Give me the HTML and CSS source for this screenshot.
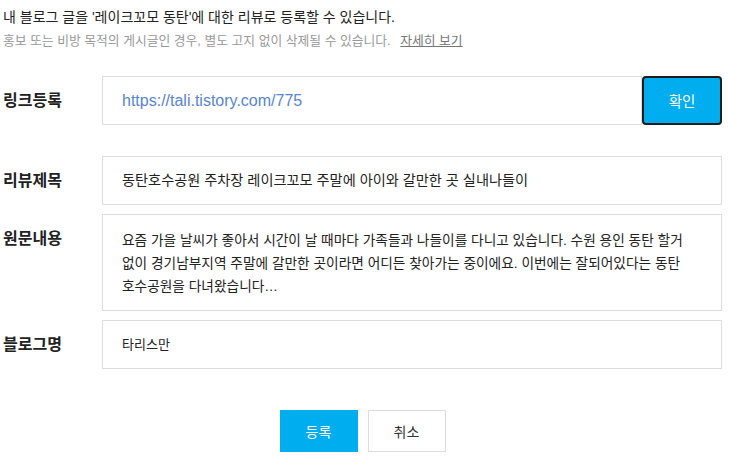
FILE: index.html
```html
<!DOCTYPE html>
<html lang="ko">
<head>
<meta charset="utf-8">
<link rel="stylesheet" href="styles.css">
</head>
<body>
<div class="page">
  <div class="intro">
    <p class="intro-main">내 블로그 글을 '레이크꼬모 동탄'에 대한 리뷰로 등록할 수 있습니다.</p>
    <p class="intro-sub">홍보 또는 비방 목적의 게시글인 경우, 별도 고지 없이 삭제될 수 있습니다. <a class="more" href="#">자세히 보기</a></p>
  </div>

  <div class="row row-link">
    <div class="label">링크등록</div>
    <div class="field field-url">https://tali.tistory.com/775</div>
    <button class="btn-confirm">확인</button>
  </div>

  <div class="row row-gap">
    <div class="label">리뷰제목</div>
    <div class="field field-title">동탄호수공원 주차장 레이크꼬모 주말에 아이와 갈만한 곳 실내나들이</div>
  </div>

  <div class="row">
    <div class="label">원문내용</div>
    <div class="field field-body">요즘 가을 날씨가 좋아서 시간이 날 때마다 가족들과 나들이를 다니고 있습니다. 수원 용인 동탄 할거<br>없이 경기남부지역 주말에 갈만한 곳이라면 어디든 찾아가는 중이에요. 이번에는 잘되어있다는 동탄<br>호수공원을 다녀왔습니다…</div>
  </div>

  <div class="row">
    <div class="label">블로그명</div>
    <div class="field">타리스만</div>
  </div>

  <div class="actions">
    <button class="btn btn-primary">등록</button>
    <button class="btn btn-cancel">취소</button>
  </div>
</div>
</body>
</html>
```

FILE: styles.css
```css
* { box-sizing: border-box; }
html, body { margin: 0; padding: 0; background: #fff; }
body {
  font-family: "Liberation Sans", "Noto Sans CJK KR", sans-serif;
  color: #222;
}
.page {
  width: 722px;
  padding: 0 0 0 3px;
}
.intro p { margin: 0; white-space: nowrap; }
.intro-main {
  padding-top: 7px;
  font-size: 14px;
  line-height: 20px;
  color: #222;
}
.intro-sub {
  margin-top: 4px !important;
  font-size: 12.8px;
  line-height: 20px;
  color: #999;
}
.more {
  margin-left: 6px;
  color: #777;
  text-decoration: underline;
}
.row {
  display: flex;
  align-items: flex-start;
  margin-top: 9px;
}
.row-link { margin-top: 25px; }
.row-gap { margin-top: 31px; }
.label {
  width: 99px;
  flex: none;
  font-size: 16px;
  font-weight: bold;
  line-height: 49px;
  color: #222;
}
.field {
  flex: 1;
  height: 49px;
  border: 1px solid #ddd;
  padding: 0 19px;
  font-size: 13px;
  line-height: 47px;
  color: #222;
  white-space: nowrap;
  overflow: hidden;
}
.field-url {
  font-size: 16px;
  color: #5785cf;
}
.field-title {
  font-size: 14.2px;
}
.field-body {
  height: 97px;
  padding-top: 14px;
  font-size: 13.7px;
  line-height: 23px;
}
.btn-confirm {
  flex: none;
  width: 80px;
  height: 49px;
  margin: 0;
  border: 2px solid #1d1d1d;
  border-radius: 4px;
  background: #00adef;
  color: #fff;
  font-family: inherit;
  font-size: 14.5px;
  cursor: pointer;
}
.actions {
  display: flex;
  justify-content: center;
  gap: 10px;
  margin-top: 41px;
}
.btn {
  width: 78px;
  height: 42px;
  margin: 0;
  font-family: inherit;
  font-size: 14px;
  cursor: pointer;
}
.btn-primary {
  border: none;
  background: #00adef;
  color: #fff;
}
.btn-cancel {
  border: 1px solid #ddd;
  background: #fff;
  color: #333;
}
```
